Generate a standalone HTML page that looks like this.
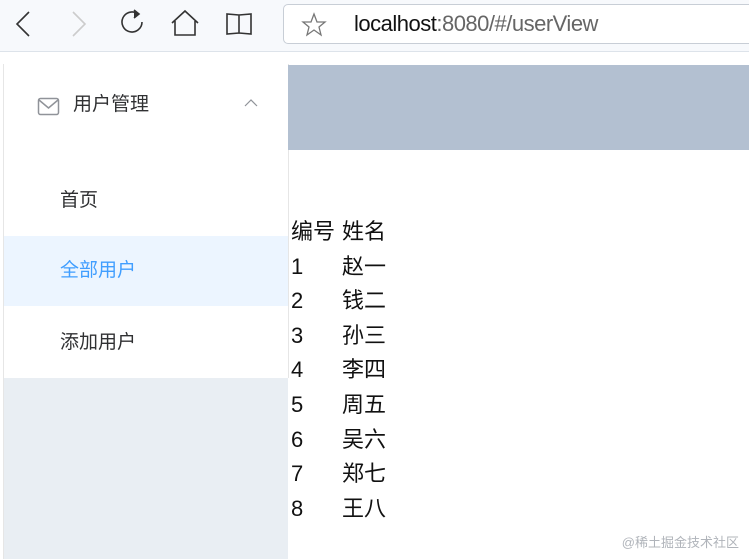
<!DOCTYPE html>
<html><head><meta charset="utf-8"><style>
*{margin:0;padding:0;box-sizing:border-box}
body{width:749px;height:559px;overflow:hidden;background:#fff;font-family:"Liberation Sans","Noto Sans CJK SC",sans-serif;position:relative}
.chrome{position:absolute;left:0;top:0;width:749px;height:52px;background:#f7f9fc;border-bottom:1px solid #dde3ea}
.addr{position:absolute;left:283px;top:4px;width:480px;height:40px;background:#fff;border:1px solid #c8ced6;border-radius:5px}
.url{position:absolute;left:354px;top:11px;font-size:22px;color:#111;letter-spacing:-0.5px}
.url span{color:#666}
.side{position:absolute;left:3px;top:64px;width:285px;height:495px;background:#e9eef3;border-left:1px solid #e6e6e6}
.menu{position:absolute;left:0;top:0;width:285px;height:314px;background:#fff;border-right:1px solid #e6e6e6}
.item{position:absolute;left:0;width:284px;height:70px;font-size:19px;color:#303133;line-height:70px;padding-left:56px}
.hdr{position:absolute;left:288px;top:65px;width:461px;height:85px;background:#b3c0d1}
.tbl{position:absolute;left:291px;top:215px;font-size:22px;color:#111;line-height:34.6px}
.tbl div span{display:inline-block;width:51px}
.wm{position:absolute;right:10px;bottom:8px;font-size:13px;color:#b0b4ba}
</style></head><body>
<div class="chrome">
<svg width="280" height="52" style="position:absolute;left:0;top:0" fill="none" stroke-width="1.6">
<path d="M29 12 L17 24 L29 36" stroke="#333"/>
<path d="M73 12 L85 24 L73 36" stroke="#ccc"/>
<path d="M138 14 A10 10 0 1 0 142 22" stroke="#333"/><path d="M134 10 L139 14 L134 18" stroke="#333" fill="#333"/>
<path d="M172 23 L185 11 L198 23 M175 21 V35 H195 V21" stroke="#333"/>
<path d="M227 14 V34 L239 33 L251 34 V14 L239 15 Z M239 15 V33" stroke="#333"/>
</svg>
<div class="addr"><svg width="30" height="30" style="position:absolute;left:15px;top:5px"><path d="M15 4 L18 12 L26 12 L20 17 L22 25 L15 20 L8 25 L10 17 L4 12 L12 12 Z" fill="none" stroke="#777" stroke-width="1.3"/></svg></div>
<div class="url">localhost<span>:8080/#/userView</span></div>
</div>
<div style="position:absolute;left:0;top:53px;width:749px;height:11px;background:#fff"></div>
<div class="side"><div class="menu">
<div class="item" style="top:6px;padding-left:69px">用户管理</div>
<svg width="24" height="20" style="position:absolute;left:33px;top:33px"><rect x="1.5" y="1.5" width="20" height="16" rx="2" fill="none" stroke="#909399" stroke-width="1.5"/><path d="M2 3 L11.5 11 L21 3" fill="none" stroke="#909399" stroke-width="1.5"/></svg>
<svg width="14" height="10" style="position:absolute;left:240px;top:35px"><path d="M1 7 L7 1 L13 7" fill="none" stroke="#909399" stroke-width="1.2"/></svg>
<div class="item" style="top:102px">首页</div>
<div class="item" style="top:172px;background:#ecf5ff;color:#409eff">全部用户</div>
<div class="item" style="top:244px">添加用户</div>
</div></div>
<div class="hdr"></div>
<div class="tbl">
<div><span>编号</span>姓名</div>
<div><span>1</span>赵一</div><div><span>2</span>钱二</div><div><span>3</span>孙三</div><div><span>4</span>李四</div>
<div><span>5</span>周五</div><div><span>6</span>吴六</div><div><span>7</span>郑七</div><div><span>8</span>王八</div>
</div>
<div class="wm">@稀土掘金技术社区</div>
</body></html>
